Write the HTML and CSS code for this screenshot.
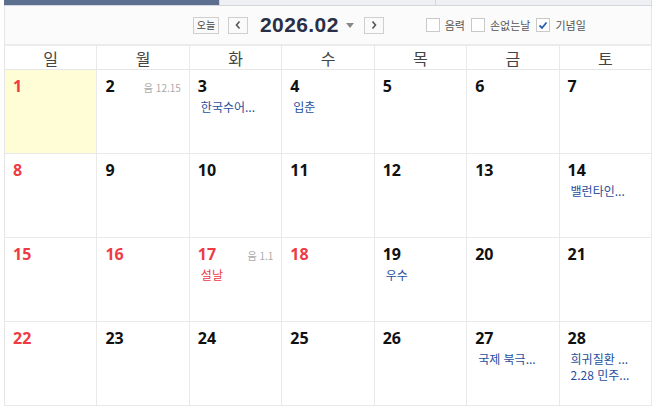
FILE: index.html
```html
<!DOCTYPE html>
<html lang="ko">
<head>
<meta charset="utf-8">
<link rel="stylesheet" href="styles.css">
</head>
<body>
<div class="wrap">
  <div class="tabs">
    <div class="tab active"></div>
    <div class="tab"></div>
    <div class="tab last"></div>
  </div>
  <div class="toolbar">
    <div class="nav">
      <span class="btn today">오늘</span>
      <span class="btn arrow"><svg width="8" height="10" viewBox="0 0 8 10"><path d="M5.5 1.5 L2.5 5 L5.5 8.5" fill="none" stroke="#555" stroke-width="1.6"/></svg></span>
      <span class="title">2026.02</span>
      <span class="caret"><svg width="8" height="5" viewBox="0 0 8 5"><path d="M0 0 H8 L4 5 Z" fill="#888"/></svg></span>
      <span class="btn arrow"><svg width="8" height="10" viewBox="0 0 8 10"><path d="M2.5 1.5 L5.5 5 L2.5 8.5" fill="none" stroke="#555" stroke-width="1.6"/></svg></span>
    </div>
    <div class="opts">
      <label class="opt"><span class="cb"></span>음력</label>
      <label class="opt"><span class="cb"></span>손없는날</label>
      <label class="opt"><span class="cb"><svg width="10" height="9" viewBox="0 0 10 9"><path d="M1.5 4.5 L4 7 L8.5 1.5" fill="none" stroke="#2a5db0" stroke-width="1.8"/></svg></span>기념일</label>
    </div>
  </div>
  <div class="cal">
    <div class="hd">일</div><div class="hd">월</div><div class="hd">화</div><div class="hd">수</div><div class="hd">목</div><div class="hd">금</div><div class="hd">토</div>

    <div class="cell today-cell"><div class="top"><span class="num red">1</span></div></div>
    <div class="cell"><div class="top"><span class="num">2</span><span class="lunar">음 12.15</span></div></div>
    <div class="cell"><div class="top"><span class="num">3</span></div><div class="ev">한국수어...</div></div>
    <div class="cell"><div class="top"><span class="num">4</span></div><div class="ev">입춘</div></div>
    <div class="cell"><div class="top"><span class="num">5</span></div></div>
    <div class="cell"><div class="top"><span class="num">6</span></div></div>
    <div class="cell"><div class="top"><span class="num">7</span></div></div>

    <div class="cell"><div class="top"><span class="num red">8</span></div></div>
    <div class="cell"><div class="top"><span class="num">9</span></div></div>
    <div class="cell"><div class="top"><span class="num">10</span></div></div>
    <div class="cell"><div class="top"><span class="num">11</span></div></div>
    <div class="cell"><div class="top"><span class="num">12</span></div></div>
    <div class="cell"><div class="top"><span class="num">13</span></div></div>
    <div class="cell"><div class="top"><span class="num">14</span></div><div class="ev">밸런타인...</div></div>

    <div class="cell"><div class="top"><span class="num red">15</span></div></div>
    <div class="cell"><div class="top"><span class="num red">16</span></div></div>
    <div class="cell"><div class="top"><span class="num red">17</span><span class="lunar">음 1.1</span></div><div class="ev red">설날</div></div>
    <div class="cell"><div class="top"><span class="num red">18</span></div></div>
    <div class="cell"><div class="top"><span class="num">19</span></div><div class="ev">우수</div></div>
    <div class="cell"><div class="top"><span class="num">20</span></div></div>
    <div class="cell"><div class="top"><span class="num">21</span></div></div>

    <div class="cell"><div class="top"><span class="num red">22</span></div></div>
    <div class="cell"><div class="top"><span class="num">23</span></div></div>
    <div class="cell"><div class="top"><span class="num">24</span></div></div>
    <div class="cell"><div class="top"><span class="num">25</span></div></div>
    <div class="cell"><div class="top"><span class="num">26</span></div></div>
    <div class="cell"><div class="top"><span class="num">27</span></div><div class="ev">국제 북극...</div></div>
    <div class="cell"><div class="top"><span class="num">28</span></div><div class="ev">희귀질환 ...</div><div class="ev">2.28 민주...</div></div>
  </div>
</div>
</body>
</html>
```
FILE: styles.css
```css
* { box-sizing: border-box; }
html, body { margin: 0; padding: 0; background: #ffffff; }
body { font-family: "Noto Sans CJK KR", "Noto Sans", sans-serif; color: #222; }
.wrap { width: 648px; margin-left: 4px; }
.tabs { display: flex; height: 6px; border-bottom: 1px solid #d3d7dd; }
.tab { flex: 1; background: #eef0f3; border-right: 1px solid #d3d7dd; }
.tab.active { background: #5c6f8e; }
.tab.last { border-right: 1px solid #dcdcdc; }
.toolbar { height: 40px; background: #fbfbfb; border-left: 1px solid #e6e6e6; border-right: 1px solid #e6e6e6; border-bottom: 2px solid #ececec; display: flex; align-items: center; padding-left: 188px; }
.nav { display: flex; align-items: center; }
.btn { display: flex; align-items: center; justify-content: center; height: 17px; border: 1px solid #cfcfcf; background: #fafafa; font-size: 10px; color: #444; line-height: 1; }
.btn.today { width: 26px; margin-right: 9px; }
.btn.arrow { width: 20px; }
.title { font-family: "Liberation Sans", Arial, sans-serif; font-weight: bold; font-size: 21px; color: #2a2f45; margin-left: 12px; letter-spacing: 0.4px; }
.caret { margin-left: 7px; margin-right: 10px; display: flex; align-items: center; }
.opts { display: flex; align-items: center; margin-left: 42px; }
.opt { display: flex; align-items: center; font-size: 11px; color: #555; margin-right: 6px; }
.cb { width: 14px; height: 14px; border: 1px solid #c9c9c9; background: #fff; margin-right: 5px; display: flex; align-items: center; justify-content: center; }
.cal { display: grid; grid-template-columns: repeat(7, 1fr); grid-template-rows: 24px repeat(4, 84px); border-left: 1px solid #e6e6e6; }
.hd { border-right: 1px solid #e9e9e9; border-bottom: 1px solid #e6e6e6; text-align: center; font-size: 16px; color: #444; line-height: 24px; }
.cell { border-right: 1px solid #e9e9e9; border-bottom: 1px solid #e9e9e9; padding: 5px 8px 0 8px; }
.today-cell { background: #fffdd6; }
.top { display: flex; justify-content: space-between; align-items: baseline; height: 24px; }
.num { font-family: "Noto Sans", sans-serif; font-weight: bold; font-size: 16px; color: #111; }
.num.red { color: #ee3b44; }
.lunar { font-size: 10px; color: #aaa; }
.ev { font-size: 12px; color: #1f4f9e; padding-left: 3px; line-height: 16px; white-space: nowrap; }
.ev.red { color: #ee3b44; }
```
